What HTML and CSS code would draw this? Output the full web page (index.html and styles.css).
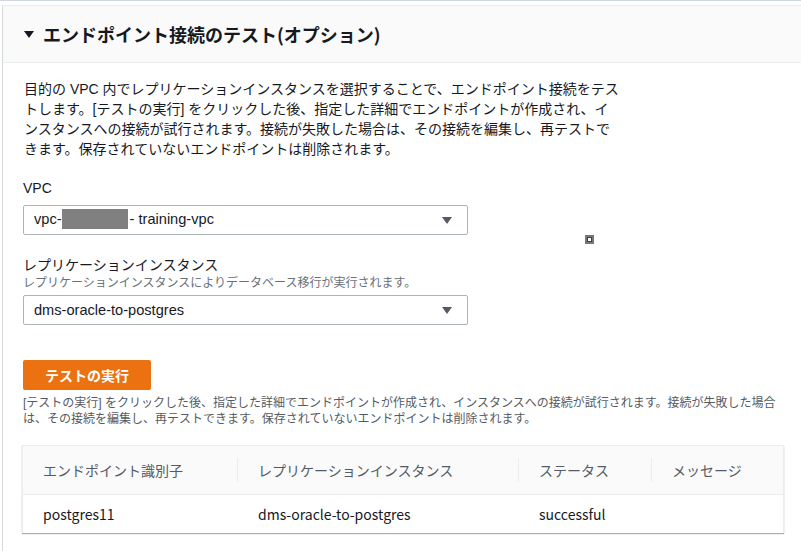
FILE: index.html
```html
<!DOCTYPE html>
<html lang="ja">
<head>
    <meta charset="UTF-8">
    <meta name="viewport" content="width=device-width, initial-scale=1.0">
    <title>エンドポイント接続のテスト</title>
    <link rel="stylesheet" href="styles.css">
</head>
<body>
    <div class="page">
        <section class="panel">
            <header class="panel-header">
                <span class="caret"></span>
                <h2>エンドポイント接続のテスト(オプション)</h2>
            </header>

            <div class="panel-body">
                <p class="intro">目的の VPC 内でレプリケーションインスタンスを選択することで、エンドポイント接続をテストします。[テストの実行] をクリックした後、指定した詳細でエンドポイントが作成され、インスタンスへの接続が試行されます。接続が失敗した場合は、その接続を編集し、再テストできます。保存されていないエンドポイントは削除されます。</p>

                <div class="field">
                    <label class="field-label">VPC</label>
                    <div class="select">
                        <span>vpc-<span class="redacted"></span>- training-vpc</span>
                        <span class="select-arrow"></span>
                    </div>
                </div>

                <div class="field">
                    <label class="field-label">レプリケーションインスタンス</label>
                    <div class="field-desc">レプリケーションインスタンスによりデータベース移行が実行されます。</div>
                    <div class="select">
                        <span>dms-oracle-to-postgres</span>
                        <span class="select-arrow"></span>
                    </div>
                </div>

                <button class="btn-primary">テストの実行</button>
                <p class="help">[テストの実行] をクリックした後、指定した詳細でエンドポイントが作成され、インスタンスへの接続が試行されます。接続が失敗した場合は、その接続を編集し、再テストできます。保存されていないエンドポイントは削除されます。</p>

                <div class="table">
                    <div class="table-head">
                        <div class="th">エンドポイント識別子</div>
                        <div class="th">レプリケーションインスタンス</div>
                        <div class="th">ステータス</div>
                        <div class="th">メッセージ</div>
                    </div>
                    <div class="table-row">
                        <div class="td">postgres11</div>
                        <div class="td">dms-oracle-to-postgres</div>
                        <div class="td">successful</div>
                        <div class="td"></div>
                    </div>
                </div>
            </div>

            <span class="cursor-mark"><span></span></span>
        </section>
    </div>
</body>
</html>
```

FILE: styles.css
```css
body {
    margin: 0;
    padding: 0;
    background-color: #ffffff;
    font-family: "Liberation Sans", "Noto Sans CJK JP", sans-serif;
    color: #16191f;
    font-size: 14px;
}

.page {
    border-top: 1px solid #cfd6e2;
    padding: 4px 0 0 2px;
    overflow: hidden;
    height: 546px;
}

.panel {
    position: relative;
    width: 802px;
    border-left: 1px solid #d5dbdb;
    border-top: 1px solid #eaeded;
    min-height: 560px;
}

.panel-header {
    display: flex;
    align-items: center;
    height: 56px;
    padding: 0 21px;
    background-color: #fafafa;
    border-bottom: 1px solid #eaeded;
}

.caret {
    width: 0;
    height: 0;
    border-left: 5px solid transparent;
    border-right: 5px solid transparent;
    border-top: 7px solid #16191f;
    margin-right: 9px;
    margin-top: 1px;
}

.panel-header h2 {
    margin: 0;
    font-family: "Noto Sans CJK JP", sans-serif;
    font-size: 18px;
    font-weight: bold;
    line-height: 24px;
}

.panel-body {
    padding: 16px 20px 0 20px;
}

.intro {
    margin: 0 0 19px 1px;
    max-width: 596px;
    line-height: 20px;
}

.field {
    margin-bottom: 20px;
}

.field-label {
    display: block;
    line-height: 20px;
    margin-bottom: 7px;
}

.field-desc {
    font-size: 12px;
    line-height: 16px;
    color: #687078;
    margin: -7px 0 4px 0;
}

.select {
    display: flex;
    align-items: center;
    justify-content: space-between;
    height: 28px;
    padding: 0 15px 0 10px;
    border: 1px solid #aab7b8;
    border-radius: 2px;
    width: 418px;
    font-size: 14.6px;
}

.redacted {
    display: inline-block;
    width: 66px;
    height: 20px;
    background-color: #808080;
    vertical-align: middle;
    margin-top: -3px;
    margin-right: 2px;
}

.select-arrow {
    width: 0;
    height: 0;
    border-left: 5px solid transparent;
    border-right: 5px solid transparent;
    border-top: 7px solid #545b64;
}

.btn-primary {
    display: block;
    margin-top: 35px;
    width: 128px;
    height: 30px;
    padding: 0;
    background-color: #ec7211;
    color: #ffffff;
    border: none;
    border-radius: 2px;
    font-family: "Noto Sans CJK JP", sans-serif;
    font-size: 14px;
    font-weight: bold;
}

.help {
    margin: 5px 0 18px 0;
    font-size: 12px;
    line-height: 16px;
    color: #545b64;
}

.table {
    width: 760px;
    margin-left: -1px;
    border: 1px solid #eaeded;
    border-bottom: none;
    box-shadow: 0 1px 1px 0 rgba(0, 28, 36, 0.35);
    font-family: "Noto Sans CJK JP", sans-serif;
}

.table-head,
.table-row {
    display: grid;
    grid-template-columns: 214px 281px 133px 1fr;
}

.table-head {
    background-color: #fafafa;
    border-bottom: 1px solid #eaeded;
    padding: 12px 0;
    color: #545b64;
}

.th {
    line-height: 24px;
    padding-left: 20px;
}

.th + .th {
    border-left: 1px solid #eaeded;
}

.table-row {
    height: 38px;
    align-items: center;
}

.td {
    padding-left: 20px;
}

.td + .td {
    padding-left: 21px;
}

.cursor-mark {
    position: absolute;
    left: 582px;
    top: 229px;
    width: 9px;
    height: 9px;
    background-color: #777777;
    display: flex;
    align-items: center;
    justify-content: center;
}

.cursor-mark span {
    width: 3px;
    height: 3px;
    background-color: #ffffff;
    border: 1px solid #3f3f3f;
}
```
